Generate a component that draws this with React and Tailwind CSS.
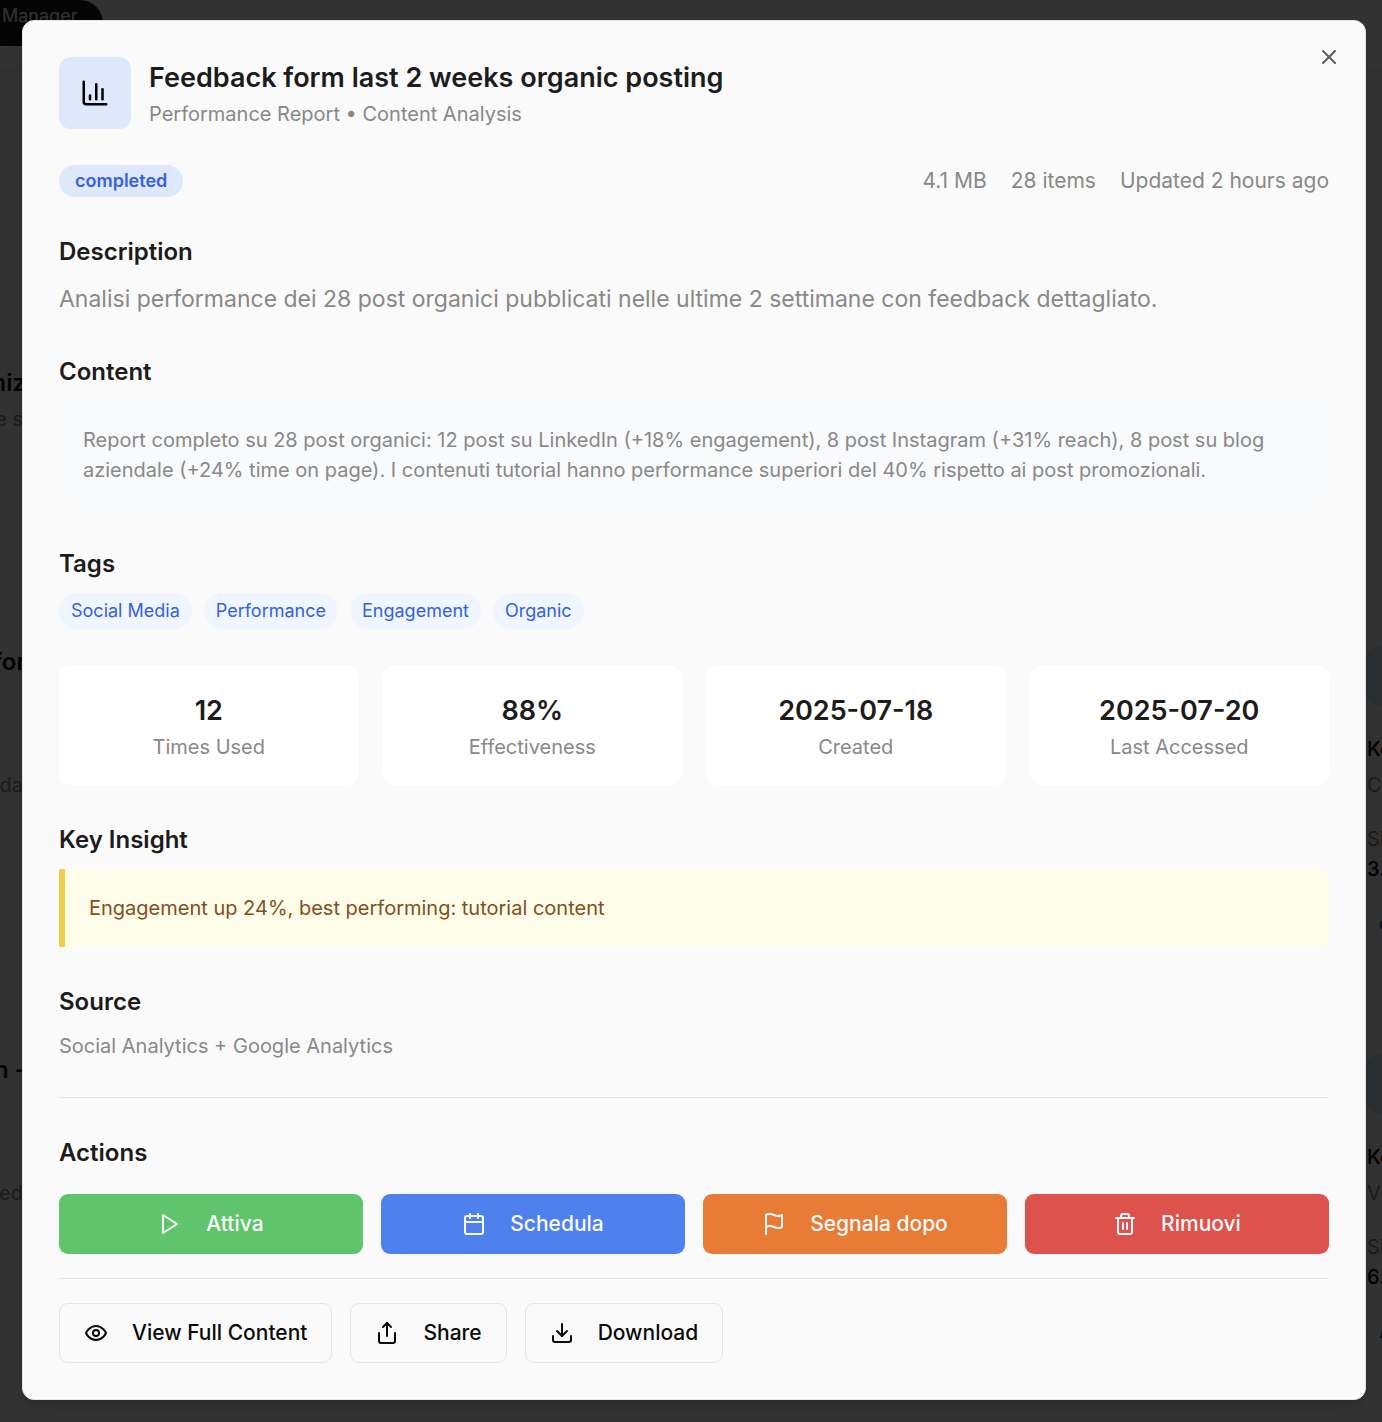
import React from "react";

function Icon({ size = "size-6", children }) {
  return (
    <svg
      viewBox="0 0 24 24"
      fill="none"
      stroke="currentColor"
      strokeWidth="2"
      strokeLinecap="round"
      strokeLinejoin="round"
      aria-hidden="true"
      className={`${size} shrink-0`}
    >
      {children}
    </svg>
  );
}

const ChartIcon = () => (
  <Icon size="size-[30px]">
    <path d="M3 3v16a2 2 0 0 0 2 2h16" />
    <path d="M18 17V9" />
    <path d="M13 17V5" />
    <path d="M8 17v-3" />
  </Icon>
);
const CloseIcon = () => (
  <Icon>
    <path d="M18 6 6 18" />
    <path d="m6 6 12 12" />
  </Icon>
);
const PlayIcon = () => (
  <Icon>
    <path d="M5 3l14 9-14 9V3z" />
  </Icon>
);
const CalendarIcon = () => (
  <Icon>
    <path d="M8 2v4" />
    <path d="M16 2v4" />
    <rect width="18" height="18" x="3" y="4" rx="2" />
    <path d="M3 10h18" />
  </Icon>
);
const FlagIcon = () => (
  <Icon>
    <path d="M4 15s1-1 4-1 5 2 8 2 4-1 4-1V3s-1 1-4 1-5-2-8-2-4 1-4 1z" />
    <path d="M4 22v-7" />
  </Icon>
);
const TrashIcon = () => (
  <Icon>
    <path d="M3 6h18" />
    <path d="M19 6v14a2 2 0 0 1-2 2H7a2 2 0 0 1-2-2V6" />
    <path d="M8 6V4a2 2 0 0 1 2-2h4a2 2 0 0 1 2 2v2" />
    <path d="M10 11v6" />
    <path d="M14 11v6" />
  </Icon>
);
const EyeIcon = () => (
  <Icon>
    <path d="M2 12s3-7 10-7 10 7 10 7-3 7-10 7-10-7-10-7Z" />
    <circle cx="12" cy="12" r="3" />
  </Icon>
);
const ShareIcon = () => (
  <Icon>
    <path d="M4 12v8a2 2 0 0 0 2 2h12a2 2 0 0 0 2-2v-8" />
    <path d="m16 6-4-4-4 4" />
    <path d="M12 2v13" />
  </Icon>
);
const DownloadIcon = () => (
  <Icon>
    <path d="M21 15v4a2 2 0 0 1-2 2H5a2 2 0 0 1-2-2v-4" />
    <path d="m7 10 5 5 5-5" />
    <path d="M12 15V3" />
  </Icon>
);

const tags = ["Social Media", "Performance", "Engagement", "Organic"];

const stats = [
  { value: "12", label: "Times Used" },
  { value: "88%", label: "Effectiveness" },
  { value: "2025-07-18", label: "Created" },
  { value: "2025-07-20", label: "Last Accessed" },
];

const actions = [
  { label: "Attiva", icon: PlayIcon, color: "bg-[#5fc46b]" },
  { label: "Schedula", icon: CalendarIcon, color: "bg-[#4f81ee]" },
  { label: "Segnala dopo", icon: FlagIcon, color: "bg-[#e87b35]" },
  { label: "Rimuovi", icon: TrashIcon, color: "bg-[#dd524c]" },
];

const secondary = [
  { label: "View Full Content", icon: EyeIcon },
  { label: "Share", icon: ShareIcon },
  { label: "Download", icon: DownloadIcon },
];

function Section({ title, children }) {
  return (
    <section className="flex flex-col gap-[10px]">
      <h3 className="text-2xl leading-[38px] font-semibold text-[#1c1c1c]">{title}</h3>
      {children}
    </section>
  );
}

function SideCard({ name, initial, value, chip }) {
  return (
    <div className="h-[408px] shrink-0 text-xl leading-[30px]">
      <div className="h-[60px] w-[60px] rounded-xl bg-[#dde8fb]" />
      <p className="mt-7 font-medium text-black">{name}</p>
      <p className="mt-1.5 text-[#888888]">{initial}</p>
      <p className="mt-6 text-[#888888]">Si</p>
      <p className="font-medium text-black">{value}</p>
      <p className="mt-6 w-20 rounded-full bg-[#eff6ff] px-3 text-lg leading-8 font-medium text-[#2743d8]">{chip}</p>
    </div>
  );
}

function PageBehind() {
  return (
    <div className="col-start-1 row-start-1 flex min-w-0 flex-col overflow-hidden bg-[#fafafa]" aria-hidden="true">
      <div className="h-[71px] shrink-0 border-b border-[#e5e5e5]">
        <div className="flex h-[46px] w-[103px] items-start rounded-r-full bg-[#1c1c1c] pt-[2px] pl-[2px] text-lg leading-7 text-[#fafafa]">
          Manager
        </div>
      </div>
      <div className="flex h-0 grow justify-between">
        <div className="flex w-[26px] flex-col items-end overflow-hidden text-xl leading-[30px] whitespace-nowrap">
          <p className="mt-[296px] text-2xl leading-8 font-semibold text-black">miz</p>
          <p className="mt-[5px] pr-[3px] text-[#888888]">e s</p>
          <p className="mt-[212px] text-2xl leading-8 font-semibold text-black">for</p>
          <p className="mt-[92px] pr-[3px] text-[#888888]">da</p>
          <p className="mt-[254px] text-2xl leading-8 font-semibold text-black">n -</p>
          <p className="mt-[92px] pr-[3px] text-[#888888]">ed</p>
        </div>
        <div className="flex w-4 flex-col overflow-hidden pt-[575px] pl-px">
          <SideCard name="Ke" initial="C" value="3." chip="on" />
          <SideCard name="Ke" initial="V" value="6." chip="A" />
        </div>
      </div>
    </div>
  );
}

export default function App() {
  return (
    <div className="grid min-h-screen grid-cols-1 font-[Inter,sans-serif]">
      <PageBehind />
      <div className="z-10 col-start-1 row-start-1 bg-black/80 pt-5 pr-4 pb-5 pl-[22px]">
        <div
          role="dialog"
          aria-labelledby="dialog-title"
          className="relative flex flex-col rounded-xl border border-[#e5e5e5] bg-[#fafafa] p-9 text-xl shadow-lg"
        >
          <button type="button" aria-label="Close" className="absolute top-6 right-6 text-[#1c1c1c] opacity-70">
            <CloseIcon />
          </button>

          <header className="flex items-center gap-[18px]">
            <div className="flex size-[72px] shrink-0 items-center justify-center rounded-xl bg-[#dde8fb] text-black">
              <ChartIcon />
            </div>
            <div>
              <h2 id="dialog-title" className="text-[27px] leading-[42px] font-semibold text-[#1c1c1c]">
                Feedback form last 2 weeks organic posting
              </h2>
              <p className="leading-[30px] text-[#888888]">Performance Report • Content Analysis</p>
            </div>
          </header>

          <div className="mt-9 flex items-center justify-between">
            <span className="rounded-full bg-[#dde8fb] px-4 text-lg leading-8 font-semibold text-[#355fe5]">
              completed
            </span>
            <div className="flex gap-6 text-[21px] leading-8 text-[#888888]">
              <span>4.1 MB</span>
              <span>28 items</span>
              <span>Updated 2 hours ago</span>
            </div>
          </div>

          <div className="mt-9 flex flex-col gap-9">
            <Section title="Description">
              <p className="text-[23px] leading-9 text-[#888888]">
                Analisi performance dei 28 post organici pubblicati nelle ultime 2 settimane con feedback dettagliato.
              </p>
            </Section>

            <Section title="Content">
              <div className="rounded-xl bg-[#f9fafb] p-6">
                <p className="leading-[30px] text-[#888888]">
                  Report completo su 28 post organici: 12 post su LinkedIn (+18% engagement), 8 post Instagram (+31%
                  reach), 8 post su blog aziendale (+24% time on page). I contenuti tutorial hanno performance superiori
                  del 40% rispetto ai post promozionali.
                </p>
              </div>
            </Section>

            <Section title="Tags">
              <ul className="flex flex-wrap gap-3">
                {tags.map((tag) => (
                  <li key={tag} className="rounded-full bg-[#eff6ff] px-3 text-lg leading-9 text-[#355fe5]">
                    {tag}
                  </li>
                ))}
              </ul>
            </Section>

            <div className="grid grid-cols-4 gap-6">
              {stats.map(({ value, label }) => (
                <div key={label} className="rounded-xl bg-white px-3 pt-[25px] pb-[23px] text-center">
                  <p className="text-[27px] leading-[42px] font-semibold text-[#1c1c1c]">{value}</p>
                  <p className="leading-[30px] text-[#888888]">{label}</p>
                </div>
              ))}
            </div>

            <Section title="Key Insight">
              <div className="rounded-r-xl border-l-[6px] border-[#f0cd4a] bg-[#fefde9] p-6">
                <p className="leading-[30px] text-[#80501f]">Engagement up 24%, best performing: tutorial content</p>
              </div>
            </Section>

            <Section title="Source">
              <p className="leading-[30px] text-[#888888]">Social Analytics + Google Analytics</p>
            </Section>
          </div>

          <section className="mt-9 border-t border-[#e5e5e5] pt-9">
            <h3 className="text-2xl leading-[38px] font-semibold text-[#1c1c1c]">Actions</h3>
            <div className="mt-[22px] grid grid-cols-4 gap-[18px]">
              {actions.map(({ label, icon: Glyph, color }) => (
                <button
                  key={label}
                  type="button"
                  className={`flex h-[60px] items-center justify-center gap-6 rounded-[9px] text-[21px] font-medium text-[#fafafa] ${color}`}
                >
                  <Glyph />
                  {label}
                </button>
              ))}
            </div>
          </section>

          <div className="mt-6 flex flex-wrap gap-[18px] border-t border-[#e5e5e5] pt-6">
            {secondary.map(({ label, icon: Glyph }) => (
              <button
                key={label}
                type="button"
                className="flex h-[60px] items-center gap-6 rounded-[9px] border border-[#e5e5e5] px-6 text-[21px] font-medium text-[#0a0a0a]"
              >
                <Glyph />
                {label}
              </button>
            ))}
          </div>
        </div>
      </div>
    </div>
  );
}
